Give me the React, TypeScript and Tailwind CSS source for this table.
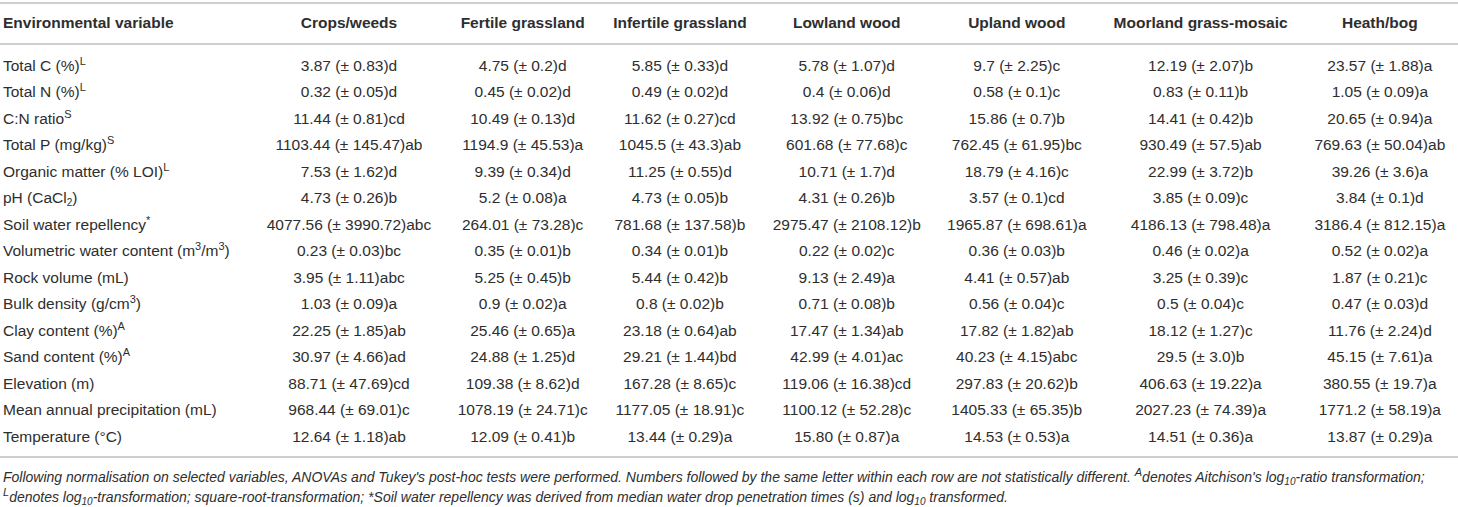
import React from "react";

type Row = { label: React.ReactNode; values: string[] };

const heads = [
  "Crops/weeds",
  "Fertile grassland",
  "Infertile grassland",
  "Lowland wood",
  "Upland wood",
  "Moorland grass-mosaic",
  "Heath/bog",
];

const Sup = ({ children }: { children: React.ReactNode }) => (
  <span className="text-[11px] leading-none align-[6px]">{children}</span>
);
const Sub = ({ children }: { children: React.ReactNode }) => (
  <span className="text-[10px] leading-none align-[-3px]">{children}</span>
);

const rows: Row[] = [
  { label: <>Total C (%)<Sup>L</Sup></>, values: ["3.87 (± 0.83)d", "4.75 (± 0.2)d", "5.85 (± 0.33)d", "5.78 (± 1.07)d", "9.7 (± 2.25)c", "12.19 (± 2.07)b", "23.57 (± 1.88)a"] },
  { label: <>Total N (%)<Sup>L</Sup></>, values: ["0.32 (± 0.05)d", "0.45 (± 0.02)d", "0.49 (± 0.02)d", "0.4 (± 0.06)d", "0.58 (± 0.1)c", "0.83 (± 0.11)b", "1.05 (± 0.09)a"] },
  { label: <>C:N ratio<Sup>S</Sup></>, values: ["11.44 (± 0.81)cd", "10.49 (± 0.13)d", "11.62 (± 0.27)cd", "13.92 (± 0.75)bc", "15.86 (± 0.7)b", "14.41 (± 0.42)b", "20.65 (± 0.94)a"] },
  { label: <>Total P (mg/kg)<Sup>S</Sup></>, values: ["1103.44 (± 145.47)ab", "1194.9 (± 45.53)a", "1045.5 (± 43.3)ab", "601.68 (± 77.68)c", "762.45 (± 61.95)bc", "930.49 (± 57.5)ab", "769.63 (± 50.04)ab"] },
  { label: <>Organic matter (% LOI)<Sup>L</Sup></>, values: ["7.53 (± 1.62)d", "9.39 (± 0.34)d", "11.25 (± 0.55)d", "10.71 (± 1.7)d", "18.79 (± 4.16)c", "22.99 (± 3.72)b", "39.26 (± 3.6)a"] },
  { label: <>pH (CaCl<Sub>2</Sub>)</>, values: ["4.73 (± 0.26)b", "5.2 (± 0.08)a", "4.73 (± 0.05)b", "4.31 (± 0.26)b", "3.57 (± 0.1)cd", "3.85 (± 0.09)c", "3.84 (± 0.1)d"] },
  { label: <>Soil water repellency<Sup>*</Sup></>, values: ["4077.56 (± 3990.72)abc", "264.01 (± 73.28)c", "781.68 (± 137.58)b", "2975.47 (± 2108.12)b", "1965.87 (± 698.61)a", "4186.13 (± 798.48)a", "3186.4 (± 812.15)a"] },
  { label: <>Volumetric water content (m<Sup>3</Sup>/m<Sup>3</Sup>)</>, values: ["0.23 (± 0.03)bc", "0.35 (± 0.01)b", "0.34 (± 0.01)b", "0.22 (± 0.02)c", "0.36 (± 0.03)b", "0.46 (± 0.02)a", "0.52 (± 0.02)a"] },
  { label: <>Rock volume (mL)</>, values: ["3.95 (± 1.11)abc", "5.25 (± 0.45)b", "5.44 (± 0.42)b", "9.13 (± 2.49)a", "4.41 (± 0.57)ab", "3.25 (± 0.39)c", "1.87 (± 0.21)c"] },
  { label: <>Bulk density (g/cm<Sup>3</Sup>)</>, values: ["1.03 (± 0.09)a", "0.9 (± 0.02)a", "0.8 (± 0.02)b", "0.71 (± 0.08)b", "0.56 (± 0.04)c", "0.5 (± 0.04)c", "0.47 (± 0.03)d"] },
  { label: <>Clay content (%)<Sup>A</Sup></>, values: ["22.25 (± 1.85)ab", "25.46 (± 0.65)a", "23.18 (± 0.64)ab", "17.47 (± 1.34)ab", "17.82 (± 1.82)ab", "18.12 (± 1.27)c", "11.76 (± 2.24)d"] },
  { label: <>Sand content (%)<Sup>A</Sup></>, values: ["30.97 (± 4.66)ad", "24.88 (± 1.25)d", "29.21 (± 1.44)bd", "42.99 (± 4.01)ac", "40.23 (± 4.15)abc", "29.5 (± 3.0)b", "45.15 (± 7.61)a"] },
  { label: <>Elevation (m)</>, values: ["88.71 (± 47.69)cd", "109.38 (± 8.62)d", "167.28 (± 8.65)c", "119.06 (± 16.38)cd", "297.83 (± 20.62)b", "406.63 (± 19.22)a", "380.55 (± 19.7)a"] },
  { label: <>Mean annual precipitation (mL)</>, values: ["968.44 (± 69.01)c", "1078.19 (± 24.71)c", "1177.05 (± 18.91)c", "1100.12 (± 52.28)c", "1405.33 (± 65.35)b", "2027.23 (± 74.39)a", "1771.2 (± 58.19)a"] },
  { label: <>Temperature (°C)</>, values: ["12.64 (± 1.18)ab", "12.09 (± 0.41)b", "13.44 (± 0.29)a", "15.80 (± 0.87)a", "14.53 (± 0.53)a", "14.51 (± 0.36)a", "13.87 (± 0.29)a"] },
];

export default function App() {
  return (
    <div className="w-[1458px] h-[507px] bg-white text-[#2e2e2e] font-['Liberation_Sans',Arial,sans-serif] overflow-hidden pt-[2px]">
      <table className="w-full border-collapse text-[15.5px] leading-[20.5px]">
        <thead>
          <tr className="border-t-2 border-b-2 border-[#cfcfcf]">
            <th className="text-left font-bold pl-[3px] pr-2 py-[9px] whitespace-nowrap">Environmental variable</th>
            {heads.map((h) => (
              <th key={h} className="text-center font-bold px-2 py-[9px] whitespace-nowrap">{h}</th>
            ))}
          </tr>
        </thead>
        <tbody className="border-b-2 border-[#cfcfcf]">
          {rows.map((r, i) => {
            const first = i === 0;
            const last = i === rows.length - 1;
            const py = first ? "pt-[11px] pb-[3px]" : last ? "pt-[3px] pb-[9px]" : "py-[3px]";
            return (
              <tr key={i}>
                <td className={`text-left pl-[3px] pr-2 whitespace-nowrap ${py}`}>{r.label}</td>
                {r.values.map((v, j) => (
                  <td key={j} className={`text-center px-2 whitespace-nowrap ${py}`}>{v}</td>
                ))}
              </tr>
            );
          })}
        </tbody>
      </table>
      <p className="italic text-[14px] leading-[19px] pl-[3px] pr-1 pt-[9px]">
        Following normalisation on selected variables, ANOVAs and Tukey's post-hoc tests were performed. Numbers followed by the same letter within each row are not statistically different. <Sup>A</Sup>denotes Aitchison's log<Sub>10</Sub>-ratio transformation; <Sup>L</Sup>denotes log<Sub>10</Sub>-transformation; square-root-transformation; *Soil water repellency was derived from median water drop penetration times (s) and log<Sub>10</Sub> transformed.
      </p>
    </div>
  );
}
